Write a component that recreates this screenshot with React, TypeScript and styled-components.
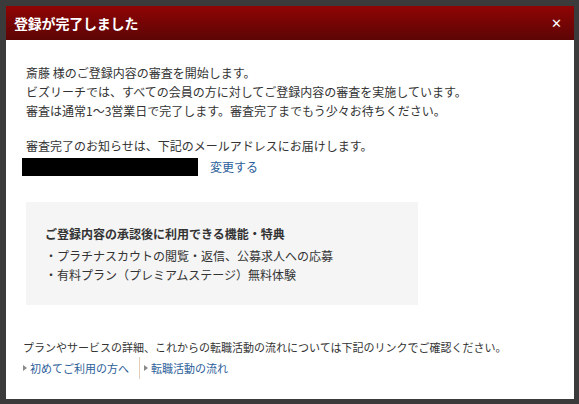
import React from "react";
import styled, { createGlobalStyle } from "styled-components";

const GlobalStyle = createGlobalStyle`
  html, body {
    margin: 0;
    padding: 0;
    background: #3b3b3b;
  }
  body {
    font-family: "Noto Sans CJK JP", "Noto Sans", sans-serif;
    color: #333;
  }
`;

const Overlay = styled.div`
  width: 579px;
  height: 404px;
  padding: 6px 0 0 6px;
  box-sizing: border-box;
  background: #3b3b3b;
`;

const Modal = styled.div`
  width: 568px;
  height: 393px;
  background: #fff;
  display: flex;
  flex-direction: column;
`;

const Header = styled.div`
  height: 34px;
  padding: 0 12px 0 8px;
  display: flex;
  align-items: center;
  justify-content: space-between;
  background: linear-gradient(to bottom, #900404 0%, #5c0505 100%);
`;

const Title = styled.h1`
  margin: 0;
  font-size: 14px;
  font-weight: 700;
  color: #fff;
  letter-spacing: -0.2px;
`;

const Close = styled.button`
  border: none;
  background: none;
  padding: 0;
  color: #fff;
  font-family: "DejaVu Sans", sans-serif;
  font-size: 13px;
  font-weight: 700;
  line-height: 1;
  cursor: pointer;
`;

const Body = styled.div`
  padding: 23px 16px 0;
  font-size: 12px;
  line-height: 19px;
`;

const Paragraph = styled.p<{ $gap?: number }>`
  margin: 0 0 ${(p) => p.$gap ?? 0}px;
  padding-left: 4px;
`;

const EmailRow = styled.div`
  height: 23px;
  display: flex;
  align-items: center;
  gap: 12px;
`;

const Masked = styled.span`
  display: inline-block;
  width: 176px;
  height: 18px;
  background: #000;
`;

const Link = styled.a`
  color: #2b5e99;
  text-decoration: none;
  cursor: pointer;
`;

const InfoBox = styled.div`
  margin: 24px 0 0 4px;
  width: 392px;
  box-sizing: border-box;
  padding: 22px 19px 21px;
  background: #f5f5f5;
`;

const InfoTitle = styled.div`
  font-weight: 700;
  margin-bottom: 3px;
`;

const InfoItem = styled.div`
  color: #333;
`;

const Footer = styled.div`
  margin-top: 33px;
  padding-left: 1px;
  font-size: 11px;
  line-height: 19px;
`;

const LinkRow = styled.div`
  display: flex;
  align-items: center;
  height: 22px;
`;

const NavLink = styled(Link)<{ $divided?: boolean }>`
  display: flex;
  align-items: center;
  height: 22px;
  gap: 3px;
  padding-right: 10px;
  ${(p) => (p.$divided ? "border-right: 1px solid #e3cdb8; margin-right: 4px;" : "")}
  &::before {
    content: "";
    width: 0;
    height: 0;
    border-style: solid;
    border-width: 3.5px 0 3.5px 4px;
    border-color: transparent transparent transparent #8a8a8a;
  }
`;

export default function App() {
  return (
    <>
      <GlobalStyle />
      <Overlay>
        <Modal>
          <Header>
            <Title>登録が完了しました</Title>
            <Close aria-label="閉じる">✕</Close>
          </Header>
          <Body>
            <Paragraph $gap={16}>
              斎藤 様のご登録内容の審査を開始します。
              <br />
              ビズリーチでは、すべての会員の方に対してご登録内容の審査を実施しています。
              <br />
              審査は通常1〜3営業日で完了します。審査完了までもう少々お待ちください。
            </Paragraph>
            <Paragraph>審査完了のお知らせは、下記のメールアドレスにお届けします。</Paragraph>
            <EmailRow>
              <Masked />
              <Link>変更する</Link>
            </EmailRow>
            <InfoBox>
              <InfoTitle>ご登録内容の承認後に利用できる機能・特典</InfoTitle>
              <InfoItem>・プラチナスカウトの閲覧・返信、公募求人への応募</InfoItem>
              <InfoItem>・有料プラン（プレミアムステージ）無料体験</InfoItem>
            </InfoBox>
            <Footer>
              プランやサービスの詳細、これからの転職活動の流れについては下記のリンクでご確認ください。
              <LinkRow>
                <NavLink $divided>初めてご利用の方へ</NavLink>
                <NavLink>転職活動の流れ</NavLink>
              </LinkRow>
            </Footer>
          </Body>
        </Modal>
      </Overlay>
    </>
  );
}
